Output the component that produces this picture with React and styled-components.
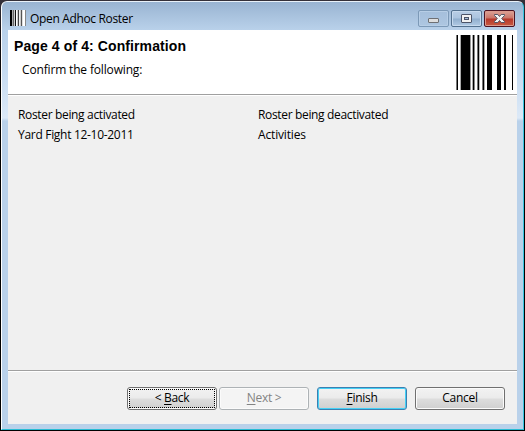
import React from 'react';
import styled, { createGlobalStyle, css } from 'styled-components';

const Global = createGlobalStyle`
  * { box-sizing: border-box; }
  body { margin: 0; background: #000; }
`;

const Window = styled.div`
  width: 525px;
  height: 431px;
  padding: 1px;
  background: linear-gradient(#35313a, #18151b 30px, #000 90px);
  font: 12px/16px "Open Sans", "Noto Sans", sans-serif;
  color: #000;
`;

const Frame = styled.div`
  height: 429px;
  display: flex;
  flex-direction: column;
  padding: 0 6px 5px;
  border: 1px solid #fff;
  border-top-color: #e9f1f9;
  border-right-color: #38c5e0;
  border-bottom-color: #27bcd4;
  border-radius: 6px 6px 0 0;
  background: linear-gradient(#99b4d2 0, #b9d1ea 28px, #c6dbf1 70px, #dce9f7 116px, #b9d1ea 119px, #b9d1ea 100%);
`;

const TitleBar = styled.header`
  height: 28px;
  flex: none;
  display: flex;
  align-items: flex-start;
  padding: 8px 2px 0;
`;

const Label = styled.span`
  white-space: pre;
  letter-spacing: ${p => p.$spacing ?? -0.34}px;
`;

const WindowTitle = styled(Label)`
  margin: 1px 0 0 4px;
  flex: 1;
`;

const Controls = styled.div`
  display: flex;
  gap: 2px;
`;

const Control = styled.button`
  width: 31px;
  height: 17px;
  padding: 0;
  display: flex;
  border: 1px solid #53718f;
  border-radius: 2px;
  background: linear-gradient(#b9cee5 0, #abc4df 7px, #91afce 8px, #b1cae4 100%);
  box-shadow: inset 0 0 0 1px #c7daee;
  ${p => p.$kind === 'minimize' && css`
    border-color: #7c99b7;
    background: linear-gradient(#a5bfdb, #adc6e1);
    box-shadow: inset 0 0 0 1px #b7cee6;
  `}
  ${p => p.$kind === 'close' && css`
    border-color: #4c1322;
    background: linear-gradient(#dca397 0, #cb7569 7px, #b7372a 8px, #c85b42 100%);
    box-shadow: inset 0 0 0 1px #dc9a8d;
  `}
`;

const Banner = styled.section`
  height: 65px;
  flex: none;
  display: flex;
  justify-content: space-between;
  padding: 5px 3px 0 6px;
  background: #fff;
  border-bottom: 1px solid #a0a0a0;
`;

const Heading = styled.h1`
  margin: 3px 0 0;
  font: bold 14px/17px "Liberation Sans", Arial, sans-serif;
  white-space: pre;
  letter-spacing: 0.1px;
`;

const Subtitle = styled(Label)`
  display: block;
  margin: 7px 0 0 8px;
`;

const Content = styled.main`
  height: 276px;
  flex: none;
  display: grid;
  grid-template-columns: 240px 1fr;
  grid-auto-rows: 20px;
  align-content: start;
  padding: 11px 10px 0;
  background: #f0f0f0;
  border-top: 1px solid #fff;
  border-bottom: 1px solid #a0a0a0;
`;

const Footer = styled.footer`
  flex: 1;
  display: flex;
  align-items: flex-start;
  justify-content: flex-end;
  gap: 8px;
  padding: 15px 12px 0;
  background: #f0f0f0;
  border-top: 1px solid #fff;
`;

const Pager = styled.div`
  display: flex;
  gap: 2px;
`;

const ActionButton = styled.button`
  width: 90px;
  height: 23px;
  padding: 0 0 1px;
  border: 1px solid #707070;
  border-radius: 3px;
  background: linear-gradient(#f2f2f2 0, #ebebeb 10px, #dddddd 11px, #cfcfcf 100%);
  box-shadow: inset 0 0 0 1px #fbfbfb;
  font: inherit;
  letter-spacing: -0.3px;
  color: #000;
  u { text-decoration-thickness: 1px; text-underline-offset: 2px; }
  ${p => p.$focused && css`
    &::after {
      content: '';
      position: absolute;
      inset: 1px;
      border: 1px dotted #000;
    }
    position: relative;
  `}
  ${p => p.$primary && css`
    border-color: #3c7fb1;
    box-shadow: inset 0 0 0 1px #45d0f5;
  `}
  &:disabled {
    border-color: #adb2b5;
    background: #f4f4f4;
    color: #838383;
  }
`;

const Svg = styled.svg`
  display: block;
  flex: none;
`;

function AppIcon() {
  const bars = [
    [0, 2, '#000'], [2, 1, '#aaa'], [3, 1, '#666'], [4, 1, '#ccc'], [5, 1, '#111'],
    [6, 1, '#fff'], [7, 1, '#ccc'], [8, 1, '#444'], [9, 1, '#eee'], [10, 1, '#ccc'],
    [11, 1, '#555'], [12, 1, '#ddd'], [13, 2, '#fff'], [15, 1, '#888'],
  ];
  return (
    <Svg width="16" height="16" shapeRendering="crispEdges">
      {bars.map(([x, w, fill]) => <rect key={x} x={x} width={w} height="16" fill={fill} />)}
    </Svg>
  );
}

function Barcode() {
  const bars = [
    [1, 1, '#777'], [2, 1, '#000'], [5, 1, '#aaa'], [6, 9, '#000'], [15, 1, '#999'],
    [17, 1, '#aaa'], [18, 1, '#000'], [19, 1, '#888'], [22, 1, '#777'], [23, 1, '#000'], [24, 1, '#bbb'],
    [27, 1, '#777'], [28, 1, '#000'], [29, 1, '#aaa'],
    [32, 5, '#000'], [42, 4, '#000'], [49, 2, '#000'], [57, 1, '#000'],
  ];
  return (
    <Svg width="59" height="55" shapeRendering="crispEdges">
      {bars.map(([x, w, fill]) => <rect key={x} x={x} width={w} height="55" fill={fill} />)}
    </Svg>
  );
}

function ControlIcon({ kind }) {
  return (
    <Svg width="29" height="15" viewBox="0 0 29 15">
      {kind === 'minimize' && <rect x="9.5" y="7.5" width="10" height="4" rx=".5" fill="#dedede" stroke="#6e7074" />}
      {kind === 'maximize' && (
        <>
          <rect x="9.5" y="3.5" width="10" height="8" rx=".5" fill="#f2f2f2" stroke="#4c5468" />
          <rect x="12.5" y="6.5" width="4" height="2" fill="#a5bdd8" stroke="#4c5468" />
        </>
      )}
      {kind === 'close' && (
        <path d="M9.5 3.5h3.3l1.7 2 1.7-2h3.3v1L16.7 7.5l2.8 3v1h-3.3l-1.7-2-1.7 2H9.5v-1l2.8-3-2.8-3z" fill="#f3f3f3" stroke="#535666" />
      )}
    </Svg>
  );
}

export default function App() {
  return (
    <>
      <Global />
      <Window>
        <Frame>
          <TitleBar>
            <AppIcon />
            <WindowTitle>Open Adhoc Roster</WindowTitle>
            <Controls>
              {['minimize', 'maximize', 'close'].map(kind => (
                <Control key={kind} $kind={kind} aria-label={kind}><ControlIcon kind={kind} /></Control>
              ))}
            </Controls>
          </TitleBar>
          <Banner>
            <div>
              <Heading>Page 4 of 4: Confirmation</Heading>
              <Subtitle $spacing={-0.16}>Confirm the following:</Subtitle>
            </div>
            <Barcode />
          </Banner>
          <Content>
            <Label>Roster being activated</Label>
            <Label>Roster being deactivated</Label>
            <Label $spacing={-0.3}>Yard Fight 12-10-2011</Label>
            <Label $spacing={-0.16}>Activities</Label>
          </Content>
          <Footer>
            <Pager>
              <ActionButton $focused>&lt; <u>B</u>ack</ActionButton>
              <ActionButton disabled><u>N</u>ext &gt;</ActionButton>
            </Pager>
            <ActionButton $primary><u>F</u>inish</ActionButton>
            <ActionButton>Cancel</ActionButton>
          </Footer>
        </Frame>
      </Window>
    </>
  );
}
